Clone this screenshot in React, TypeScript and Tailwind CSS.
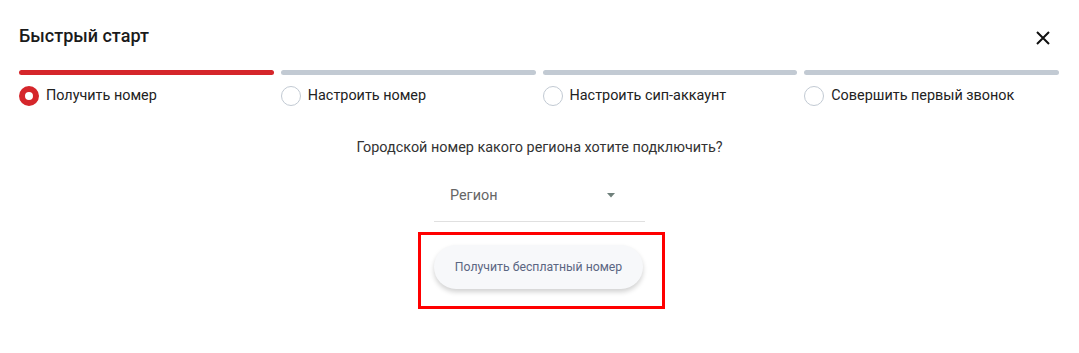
import React from "react";

function Step({ label, active }: { label: string; active?: boolean }) {
  return (
    <div className="flex flex-col">
      <div className={active ? "h-[5px] rounded-full bg-[#d5262b]" : "h-[5px] rounded-full bg-[#c2cad3]"} />
      <div className="mt-[11px] flex items-center gap-[7px]">
        {active ? (
          <div className="h-[20px] w-[20px] rounded-full border-[6px] border-[#d5262b] bg-white" />
        ) : (
          <div className="h-[20px] w-[20px] rounded-full border border-[#c2cad3] bg-white" />
        )}
        <span className="text-[14.4px] leading-[20px] text-[#222222]">{label}</span>
      </div>
    </div>
  );
}

export default function App() {
  return (
    <div className="h-[353px] w-[1079px] bg-white font-['Roboto',sans-serif]">
      <div className="flex items-center justify-between pl-[19px] pr-[28px] pt-[24px]">
        <h1 className="text-[18px] font-medium leading-[24px] text-[#1a1a1a]">Быстрый старт</h1>
        <svg width="16" height="16" viewBox="0 0 16 16" className="mt-[3px]">
          <path d="M2 2 L14 14 M14 2 L2 14" stroke="#111" strokeWidth="2" />
        </svg>
      </div>
      <div className="mt-[22px] grid grid-cols-4 gap-[7px] pl-[19px] pr-[20px]">
        <Step label="Получить номер" active />
        <Step label="Настроить номер" />
        <Step label="Настроить сип-аккаунт" />
        <Step label="Совершить первый звонок" />
      </div>
      <div className="mt-[32px] flex flex-col items-center">
        <p className="text-[14.4px] leading-[20px] text-[#333333]">
          Городской номер какого региона хотите подключить?
        </p>
        <div className="mt-[18px] flex h-[46px] w-[211px] items-center justify-between border-b border-[#e0e0e0] pb-[6px] pl-[16px] pr-[30px]">
          <span className="text-[14.4px] text-[#666666]">Регион</span>
          <svg width="8" height="5" viewBox="0 0 8 5">
            <path d="M0 0 L8 0 L4 4.5 Z" fill="#6f807b" />
          </svg>
        </div>
        <div className="ml-[4px] mt-[10px] border-[3px] border-[#ff0000] pb-[17px] pl-[13px] pr-[19px] pt-[10px]">
          <button className="h-[44px] w-[209px] rounded-full bg-[#f7f8fa] text-[12.25px] text-[#5b6682] shadow-[0_3px_5px_rgba(0,0,0,0.18)]">
            Получить бесплатный номер
          </button>
        </div>
      </div>
    </div>
  );
}
